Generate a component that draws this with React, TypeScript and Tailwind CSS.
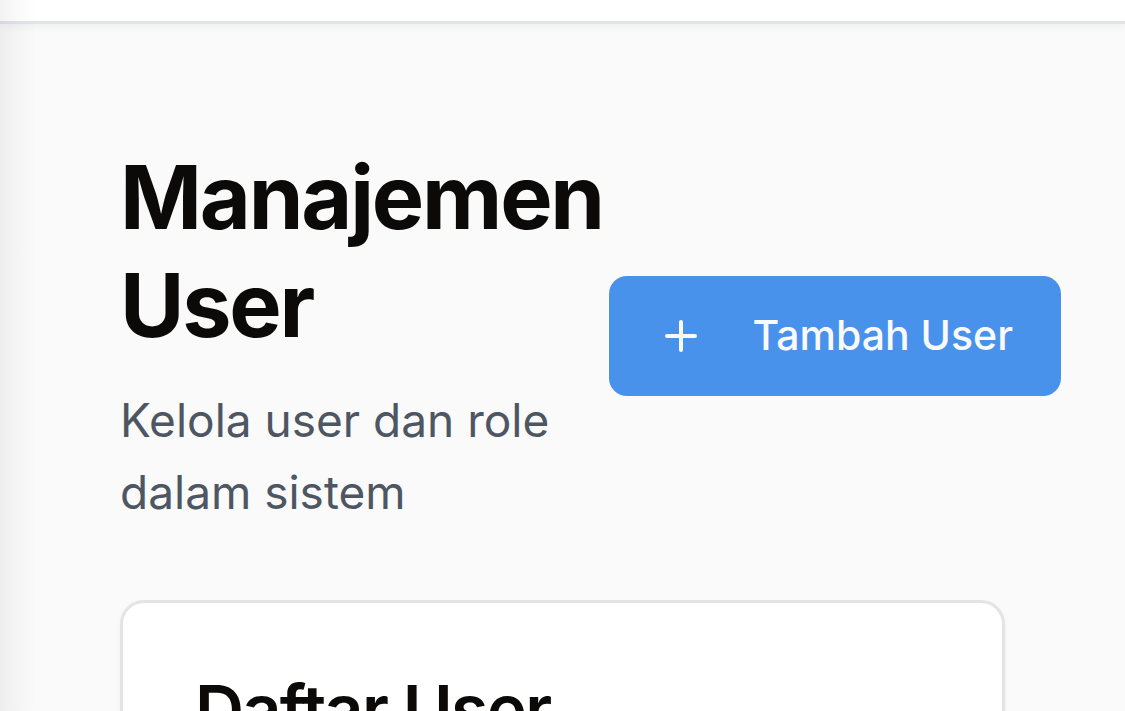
import React from "react";

export default function App() {
  return (
    <div className="relative flex h-screen flex-col overflow-hidden bg-[#fafafa] font-['Inter',sans-serif] text-[#0c0a09]">
      <header className="h-6 shrink-0 border-b-3 border-[#e1e4e8] bg-white shadow-[0_3px_9px_rgba(0,30,30,0.05)]" />
      <div aria-hidden="true" className="absolute inset-y-0 left-0 w-9 bg-linear-to-r from-black/5 via-black/2 to-transparent" />
      <main className="flex flex-col gap-[72px] pt-[119px] pr-16 pl-30">
        <div className="flex items-center justify-between">
          <div className="min-w-0 flex-1">
            <h1 className="text-[88px] leading-[108px] font-bold tracking-tight">Manajemen User</h1>
            <p className="mt-[25px] text-[46px] leading-[72px] text-[#4d5662]">Kelola user dan role dalam sistem</p>
          </div>
          <button type="button" className="flex h-30 shrink-0 items-center gap-12 rounded-[18px] bg-[#4892ec] px-12 text-[41px] font-medium text-[#fafafa]">
            <svg viewBox="0 0 24 24" className="size-12" fill="none" stroke="currentColor" strokeWidth="2" strokeLinecap="round" aria-hidden="true">
              <path d="M5 12h14M12 5v14" />
            </svg>
            Tambah User
          </button>
        </div>
        <section className="mr-14 rounded-3xl border-3 border-[#e5e4e4] bg-white px-[72px] py-[70px] shadow-[0_3px_6px_rgba(0,0,0,0.04)]">
          <h2 className="text-[68px] leading-[72px] font-semibold tracking-tight">Daftar User</h2>
        </section>
      </main>
    </div>
  );
}
